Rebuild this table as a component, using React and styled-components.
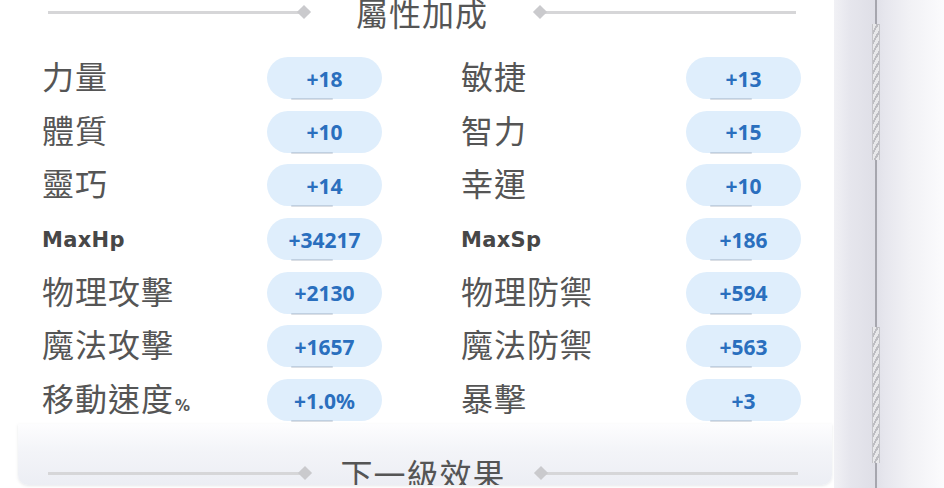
import React from "react";
import styled, { createGlobalStyle } from "styled-components";

const GlobalStyle = createGlobalStyle`
  html, body {
    margin: 0;
    padding: 0;
    height: 488px;
    overflow: hidden;
    background: #ffffff;
  }
  body {
    font-family: "Noto Sans CJK TC", "Noto Sans", sans-serif;
  }
`;

const Page = styled.div`
  display: flex;
  width: 944px;
  height: 488px;
  overflow: hidden;
  background: #ffffff;
`;

const Main = styled.div`
  width: 834px;
  flex-shrink: 0;
  padding-left: 18px;
  box-sizing: border-box;
  display: flex;
  flex-direction: column;
`;

const Card = styled.div`
  width: 814px;
  display: flex;
  flex-direction: column;
`;

const Divider = styled.div`
  display: flex;
  align-items: center;
  height: 34px;
  padding: 0 ${({ $right }) => $right}px 0 ${({ $left }) => $left}px;
  margin-top: ${({ $top }) => $top}px;
`;

const Rule = styled.div`
  flex: 1;
  height: 3px;
  background: #d6d6d8;
`;

const Diamond = styled.span`
  width: 10px;
  height: 10px;
  background: #cacacd;
  transform: rotate(45deg);
  flex-shrink: 0;
  margin: 0 ${({ $side }) => ($side === "left" ? "0 0 -2px" : "-2px 0 0")};
`;

const Title = styled.h2`
  margin: 0;
  width: 226px;
  text-align: center;
  font-family: "Noto Sans CJK TC", sans-serif;
  font-weight: 400;
  font-size: 32px;
  letter-spacing: 1px;
  line-height: 34px;
  color: #555555;
`;

const StatGrid = styled.div`
  display: grid;
  grid-template-columns: 340px 340px;
  column-gap: 79px;
  row-gap: 11.7px;
  margin: 28px 0 0 24px;
`;

const StatRow = styled.div`
  display: flex;
  align-items: center;
  justify-content: space-between;
  height: 42px;
`;

const Label = styled.span`
  font-family: ${({ $latin }) =>
    $latin ? '"DejaVu Sans", sans-serif' : '"Noto Sans CJK TC", sans-serif'};
  font-weight: ${({ $latin }) => ($latin ? 700 : 400)};
  font-size: ${({ $latin }) => ($latin ? "21px" : "32px")};
  letter-spacing: ${({ $latin }) => ($latin ? "0.3px" : "1px")};
  color: ${({ $latin }) => ($latin ? "#474747" : "#555555")};
  margin-bottom: ${({ $latin }) => ($latin ? "-3px" : "6px")};
  line-height: 1;
  white-space: nowrap;
`;

const Percent = styled.span`
  font-family: "DejaVu Sans", sans-serif;
  font-weight: 700;
  font-size: 15px;
  letter-spacing: -1px;
  color: #555555;
  margin-left: 1px;
`;

const Pill = styled.span`
  position: relative;
  width: 115px;
  height: 42px;
  border-radius: 21px;
  background: #dfeefc;
  display: flex;
  align-items: center;
  justify-content: center;
  padding-top: 1px;
  box-sizing: border-box;
  font-family: "Noto Sans", sans-serif;
  font-weight: 700;
  font-size: 21px;
  color: #2a6fbe;

  &::after {
    content: "";
    position: absolute;
    left: 24px;
    bottom: -1px;
    width: 42px;
    height: 2px;
    border-radius: 1px;
    background: rgba(70, 90, 120, 0.2);
  }
`;

const Footer = styled.div`
  margin-top: 3px;
  height: 61px;
  overflow: hidden;
  border-radius: 0 0 10px 10px;
  background: linear-gradient(to bottom, #fdfdfe 0%, #f3f4f8 45%, #eceef4 100%);
  box-shadow: 0 1px 3px rgba(120, 125, 140, 0.18);
`;

const Sidebar = styled.div`
  position: relative;
  flex: 1;
  background: linear-gradient(
    to right,
    #f1f1f5 0px,
    #e6e6ed 16px,
    #dfdfe7 40px,
    #e6e6ed 50px,
    #f1f1f5 75px,
    #fbfbfd 110px
  );

  &::before {
    content: "";
    position: absolute;
    left: 41px;
    top: 0;
    bottom: 0;
    width: 2px;
    background: #a6a6ae;
  }
`;

const Hatch = styled.div`
  position: absolute;
  left: 38px;
  width: 8px;
  top: ${({ $top }) => $top}px;
  height: ${({ $h }) => $h}px;
  background: repeating-linear-gradient(
    -60deg,
    #e8e8ea 0px,
    #e8e8ea 3px,
    #bdbdc2 3px,
    #bdbdc2 5px
  );
  border-left: 1px solid #c4c4c8;
  border-right: 1px solid #c4c4c8;
  box-sizing: border-box;
`;

const stats = [
  { label: "力量", value: "+18" },
  { label: "敏捷", value: "+13" },
  { label: "體質", value: "+10" },
  { label: "智力", value: "+15" },
  { label: "靈巧", value: "+14" },
  { label: "幸運", value: "+10" },
  { label: "MaxHp", value: "+34217", latin: true },
  { label: "MaxSp", value: "+186", latin: true },
  { label: "物理攻擊", value: "+2130" },
  { label: "物理防禦", value: "+594" },
  { label: "魔法攻擊", value: "+1657" },
  { label: "魔法防禦", value: "+563" },
  { label: "移動速度", value: "+1.0%", percent: true },
  { label: "暴擊", value: "+3" },
];

const SectionDivider = ({ title, top, left, right }) => (
  <Divider $top={top} $left={left} $right={right}>
    <Rule />
    <Diamond $side="left" />
    <Title>{title}</Title>
    <Diamond $side="right" />
    <Rule />
  </Divider>
);

export default function App() {
  return (
    <>
      <GlobalStyle />
      <Page>
        <Main>
          <Card>
            <SectionDivider title="屬性加成" top={-5} left={30} right={36} />
            <StatGrid>
              {stats.map((s) => (
                <StatRow key={s.label}>
                  <Label $latin={s.latin}>
                    {s.label}
                    {s.percent && <Percent>%</Percent>}
                  </Label>
                  <Pill>{s.value}</Pill>
                </StatRow>
              ))}
            </StatGrid>
            <Footer>
              <SectionDivider title="下一級效果" top={32} left={30} right={34} />
            </Footer>
          </Card>
        </Main>
        <Sidebar>
          <Hatch $top={24} $h={136} />
          <Hatch $top={327} $h={136} />
        </Sidebar>
      </Page>
    </>
  );
}
